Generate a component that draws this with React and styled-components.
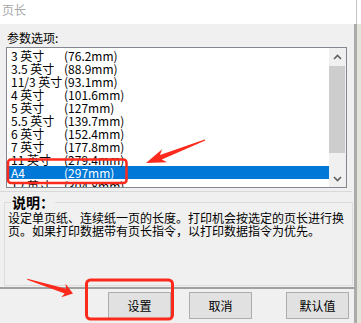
import React from 'react';
import styled, { createGlobalStyle } from 'styled-components';

const Global = createGlobalStyle`
  html, body { margin: 0; padding: 0; }
  body {
    background: #f0f0f0;
    font-family: "Noto Sans CJK SC", "Noto Sans", sans-serif;
    font-size: 12px;
    color: #000;
    overflow: hidden;
  }
`;

const Frame = styled.div`
  position: relative;
  width: 361px;
  height: 323px;
  display: flex;
  overflow: hidden;
`;

const Dialog = styled.div`
  width: 354px;
  display: flex;
  flex-direction: column;
  background: #f0f0f0;
`;

const Edge = styled.div`
  width: 7px;
  display: flex;
  flex-direction: column;
`;

const EdgeTop = styled.div`
  height: 24px;
  display: flex;
  background: #fff;
  &::before {
    content: "";
    width: 2px;
    background: #fff;
  }
  &::after {
    content: "";
    width: 1px;
    background: #c4c4c4;
  }
`;

const EdgeBody = styled.div`
  flex: 1;
  display: flex;
  background: #e4e3dc;
  &::before {
    content: "";
    width: 3px;
    background: #ababab;
  }
`;

const Header = styled.div`
  height: 24px;
  box-sizing: border-box;
  background: #fff;
  padding: 3px 0 0 2px;
  color: #a8a8a8;
  font-size: 12px;
  line-height: 14px;
`;

const FieldLabel = styled.div`
  margin: 7px 0 0 7px;
  height: 16px;
  line-height: 13px;
`;

const ListBox = styled.div`
  margin-left: 6px;
  width: 341px;
  height: 141px;
  box-sizing: border-box;
  border: 1px solid #828790;
  background: #fff;
  display: flex;
`;

const Rows = styled.div`
  flex: 1;
  padding-top: 1px;
  overflow: hidden;
`;

const Row = styled.div`
  height: 13px;
  line-height: 13px;
  display: flex;
  padding-left: 4px;
  white-space: nowrap;
  background: ${(p) => (p.$selected ? '#0078d7' : 'transparent')};
  color: ${(p) => (p.$selected ? '#fff' : '#000')};
`;

const NameCell = styled.span`
  width: 53px;
`;

const SizeCell = styled.span``;

const ScrollBar = styled.div`
  width: 17px;
  background: #f0f0f0;
  display: flex;
  flex-direction: column;
`;

const ScrollButton = styled.div`
  height: 17px;
  display: flex;
  align-items: center;
  justify-content: center;
`;

const Thumb = styled.div`
  margin: 1px 1px 0 0;
  height: 87px;
  background: #cdcdcd;
`;

const Spacer = styled.div`
  flex: 1;
`;

const Separator = styled.div`
  margin-top: 3px;
  width: 352px;
  height: 1px;
  background: #d9d9d9;
`;

const Group = styled.fieldset`
  margin: 2px 0 0 4px;
  width: 349px;
  height: 92px;
  box-sizing: border-box;
  border: 1px solid #dcdcdc;
  padding: 1px 2px 0 3px;
  min-width: 0;
`;

const Legend = styled.legend`
  margin-left: 3px;
  padding: 0 1px;
  font-size: 14px;
  font-weight: bold;
  line-height: 16px;
`;

const Desc = styled.p`
  margin: 0;
  line-height: 13px;
  font-size: 12px;
`;

const BottomRule = styled.div`
  margin-top: 1px;
  height: 2px;
  background: #a0a0a0;
`;

const ButtonRow = styled.div`
  display: flex;
  margin-top: 3px;
`;

const Button = styled.button`
  margin-left: ${(p) => p.$offset}px;
  width: 63px;
  height: 27px;
  padding: 0;
  background: #e1e1e1;
  border: 1px solid #adadad;
  font-family: "Noto Sans CJK SC", "Noto Sans", sans-serif;
  font-size: 12px;
  color: #000;
  line-height: 14px;
`;

const Overlay = styled.svg`
  position: absolute;
  left: 0;
  top: 0;
  width: 361px;
  height: 323px;
  pointer-events: none;
`;

const Chevron = ({ up }) => (
  <svg width="9" height="6" viewBox="0 0 9 6">
    <polyline
      points={up ? '1,5 4.5,1.5 8,5' : '1,1 4.5,4.5 8,1'}
      fill="none"
      stroke="#606060"
      strokeWidth="1.6"
    />
  </svg>
);

const items = [
  ['3 英寸', '(76.2mm)'],
  ['3.5 英寸', '(88.9mm)'],
  ['11/3 英寸', '(93.1mm)'],
  ['4 英寸', '(101.6mm)'],
  ['5 英寸', '(127mm)'],
  ['5.5 英寸', '(139.7mm)'],
  ['6 英寸', '(152.4mm)'],
  ['7 英寸', '(177.8mm)'],
  ['11 英寸', '(279.4mm)'],
  ['A4', '(297mm)'],
  ['12 英寸', '(304.8mm)'],
];

const RED = '#fb2a1c';

export default function App() {
  return (
    <>
      <Global />
      <Frame>
        <Dialog>
          <Header>页长</Header>
          <FieldLabel>参数选项:</FieldLabel>
          <ListBox>
            <Rows>
              {items.map(([n, s], i) => (
                <Row key={i} $selected={i === 9}>
                  <NameCell>{n}</NameCell>
                  <SizeCell>{s}</SizeCell>
                </Row>
              ))}
            </Rows>
            <ScrollBar>
              <ScrollButton>
                <Chevron up />
              </ScrollButton>
              <Thumb />
              <Spacer />
              <ScrollButton>
                <Chevron />
              </ScrollButton>
            </ScrollBar>
          </ListBox>
          <Separator />
          <Group>
            <Legend>说明：</Legend>
            <Desc>
              设定单页纸、连续纸一页的长度。打印机会按选定的页长进行换
              <br />
              页。如果打印数据带有页长指令，以打印数据指令为优先。
            </Desc>
          </Group>
          <BottomRule />
          <ButtonRow>
            <Button $offset={108}>设置</Button>
            <Button $offset={18}>取消</Button>
            <Button $offset={34}>默认值</Button>
          </ButtonRow>
        </Dialog>
        <Edge>
          <EdgeTop />
          <EdgeBody />
        </Edge>
        <Overlay viewBox="0 0 361 323">
          <rect x="8" y="159.5" width="118.5" height="23.5" rx="3" fill="none" stroke={RED} strokeWidth="2.5" />
          <rect x="86.5" y="280" width="86" height="39" rx="4" fill="none" stroke={RED} strokeWidth="3" />
          <polygon
            fill={RED}
            points="205.3,140.6 161.8,159.5 167.1,162.2 146,163 162.1,149.2 160,154.9 204.7,139.4"
          />
          <polygon
            fill={RED}
            points="27.2,279.8 64.7,293.5 61.3,297.2 73,293.5 65.5,283.8 66.1,288.7 27.4,278.8"
          />
        </Overlay>
      </Frame>
    </>
  );
}
